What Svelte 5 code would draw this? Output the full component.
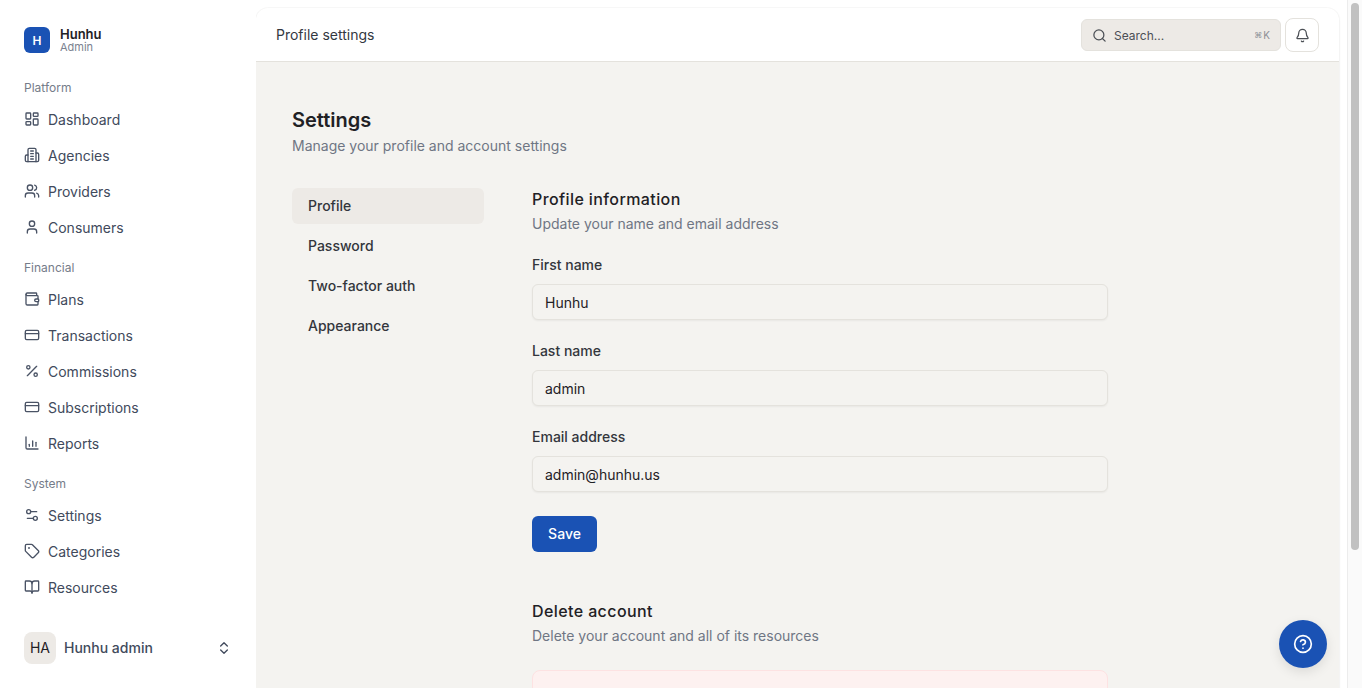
<script>
  const sections = [
    { label: 'Platform', items: ['Dashboard', 'Agencies', 'Providers', 'Consumers'] },
    { label: 'Financial', items: ['Plans', 'Transactions', 'Commissions', 'Subscriptions', 'Reports'] },
    { label: 'System', items: ['Settings', 'Categories', 'Resources'] }
  ];
  const icons = {
    Dashboard: '<rect width="7" height="9" x="3" y="3" rx="1"/><rect width="7" height="5" x="14" y="3" rx="1"/><rect width="7" height="9" x="14" y="12" rx="1"/><rect width="7" height="5" x="3" y="16" rx="1"/>',
    Agencies: '<path d="M6 22V4a2 2 0 0 1 2-2h8a2 2 0 0 1 2 2v18Z"/><path d="M6 12H4a2 2 0 0 0-2 2v6a2 2 0 0 0 2 2h2"/><path d="M18 9h2a2 2 0 0 1 2 2v9a2 2 0 0 1-2 2h-2"/><path d="M10 6h4"/><path d="M10 10h4"/><path d="M10 14h4"/><path d="M10 18h4"/>',
    Providers: '<path d="M16 21v-2a4 4 0 0 0-4-4H6a4 4 0 0 0-4 4v2"/><circle cx="9" cy="7" r="4"/><path d="M22 21v-2a4 4 0 0 0-3-3.87"/><path d="M16 3.13a4 4 0 0 1 0 7.75"/>',
    Consumers: '<path d="M19 21v-2a4 4 0 0 0-4-4H9a4 4 0 0 0-4 4v2"/><circle cx="12" cy="7" r="4"/>',
    Plans: '<path d="M19 7V4a1 1 0 0 0-1-1H5a2 2 0 0 0 0 4h15a1 1 0 0 1 1 1v4h-3a2 2 0 0 0 0 4h3a1 1 0 0 0 1-1v-2a1 1 0 0 0-1-1"/><path d="M3 5v14a2 2 0 0 0 2 2h15a1 1 0 0 0 1-1v-4"/>',
    Transactions: '<rect width="20" height="14" x="2" y="5" rx="2"/><line x1="2" x2="22" y1="10" y2="10"/>',
    Commissions: '<line x1="19" x2="5" y1="5" y2="19"/><circle cx="6.5" cy="6.5" r="2.5"/><circle cx="17.5" cy="17.5" r="2.5"/>',
    Subscriptions: '<rect width="20" height="14" x="2" y="5" rx="2"/><line x1="2" x2="22" y1="10" y2="10"/>',
    Reports: '<path d="M3 3v16a2 2 0 0 0 2 2h16"/><path d="M8 17v-3"/><path d="M13 17V9"/><path d="M18 17v-6"/>',
    Settings: '<path d="M14 17H5"/><path d="M19 7h-9"/><circle cx="17" cy="17" r="3"/><circle cx="7" cy="7" r="3"/>',
    Categories: '<path d="M12.586 2.586A2 2 0 0 0 11.172 2H4a2 2 0 0 0-2 2v7.172a2 2 0 0 0 .586 1.414l8.704 8.704a2.426 2.426 0 0 0 3.42 0l6.58-6.58a2.426 2.426 0 0 0 0-3.42z"/><circle cx="7.5" cy="7.5" r=".5" fill="currentColor"/>',
    Resources: '<path d="M12 7v14"/><path d="M3 18a1 1 0 0 1-1-1V4a1 1 0 0 1 1-1h5a4 4 0 0 1 4 4 4 4 0 0 1 4-4h5a1 1 0 0 1 1 1v13a1 1 0 0 1-1 1h-6a3 3 0 0 0-3 3 3 3 0 0 0-3-3z"/>'
  };
  const tabs = ['Profile', 'Password', 'Two-factor auth', 'Appearance'];
  const fields = [
    { label: 'First name', value: 'Hunhu' },
    { label: 'Last name', value: 'admin' },
    { label: 'Email address', value: 'admin@hunhu.us' }
  ];
</script>

<div class="shell">
  <aside class="sidebar">
    <div class="brand">
      <div class="logo">H</div>
      <div class="brand-text">
        <div class="brand-name">Hunhu</div>
        <div class="brand-role">Admin</div>
      </div>
    </div>
    <nav class="nav">
      {#each sections as section}
        <div class="section-label">{section.label}</div>
        {#each section.items as item}
          <div class="nav-item">
            <svg class="icon" viewBox="0 0 24 24" fill="none" stroke="currentColor" stroke-width="2" stroke-linecap="round" stroke-linejoin="round">{@html icons[item]}</svg>
            <span>{item}</span>
          </div>
        {/each}
      {/each}
    </nav>
    <div class="user">
      <div class="avatar">HA</div>
      <div class="user-name">Hunhu admin</div>
      <svg class="chev" viewBox="0 0 24 24" fill="none" stroke="currentColor" stroke-width="2" stroke-linecap="round" stroke-linejoin="round"><path d="m7 15 5 5 5-5"/><path d="m7 9 5-5 5 5"/></svg>
    </div>
  </aside>

  <main class="main">
    <header class="topbar">
      <div class="crumb">Profile settings</div>
      <div class="top-actions">
        <div class="search">
          <svg class="search-icon" viewBox="0 0 24 24" fill="none" stroke="currentColor" stroke-width="2" stroke-linecap="round" stroke-linejoin="round"><circle cx="11" cy="11" r="8"/><path d="m21 21-4.3-4.3"/></svg>
          <span class="search-text">Search...</span>
          <span class="kbd"><span class="cmd">⌘</span><span>K</span></span>
        </div>
        <button class="bell" aria-label="Notifications">
          <svg viewBox="0 0 24 24" fill="none" stroke="currentColor" stroke-width="2" stroke-linecap="round" stroke-linejoin="round"><path d="M10.268 21a2 2 0 0 0 3.464 0"/><path d="M3.262 15.326A1 1 0 0 0 4 17h16a1 1 0 0 0 .74-1.673C19.41 13.956 18 12.499 18 8A6 6 0 0 0 6 8c0 4.499-1.411 5.956-2.738 7.326"/></svg>
        </button>
      </div>
    </header>

    <div class="content">
      <h1>Settings</h1>
      <p class="lead">Manage your profile and account settings</p>

      <div class="columns">
        <div class="tabs">
          {#each tabs as tab, i}
            <div class="tab" class:active={i === 0}>{tab}</div>
          {/each}
        </div>

        <div class="panel">
          <h2 class="first">Profile information</h2>
          <p class="sub">Update your name and email address</p>

          <div class="fields">
            {#each fields as f}
              <div class="field">
                <div class="field-label">{f.label}</div>
                <div class="input">{f.value}</div>
              </div>
            {/each}
          </div>
          <button class="save">Save</button>

          <h2 class="delete-title">Delete account</h2>
          <p class="sub">Delete your account and all of its resources</p>

          <div class="danger"></div>
        </div>
      </div>
    </div>
  </main>

  <button class="help" aria-label="Help">
    <svg viewBox="0 0 24 24" fill="none" stroke="currentColor" stroke-width="2" stroke-linecap="round" stroke-linejoin="round"><circle cx="12" cy="12" r="10"/><path d="M9.09 9a3 3 0 0 1 5.83 1c0 2-3 3-3 3"/><path d="M12 17h.01"/></svg>
  </button>

  <div class="scrollbar"><div class="thumb"></div></div>
</div>

<style>
  :global(body) {
    margin: 0;
    background: #fff;
    font-family: Inter, "Liberation Sans", sans-serif;
    color: #1f2125;
  }
  .shell { display: flex; align-items: flex-start; }
  .sidebar {
    position: sticky;
    top: 0;
    width: 256px;
    height: 688px;
    flex: none;
    box-sizing: border-box;
    display: flex;
    flex-direction: column;
    padding: 0 24px;
    background: #fff;
  }
  .brand { display: flex; align-items: center; gap: 10px; height: 26px; margin-top: 27px; }
  .logo {
    width: 26px; height: 26px; border-radius: 6px; background: #1a52b4; color: #fff;
    display: flex; align-items: center; justify-content: center;
    font-size: 12px; font-weight: 600;
  }
  .brand-name { font-size: 13px; font-weight: 600; line-height: 14px; color: #1f2125; }
  .brand-role { font-size: 11px; line-height: 13px; color: #7b8290; }
  .nav { margin-top: 27px; flex: 1; }
  .section-label {
    font-size: 12px; line-height: 16px; color: #757c89; margin-bottom: 5px;
  }
  .nav-item + .section-label { margin-top: 15px; }
  .nav-item {
    display: flex; align-items: center; gap: 8px; height: 36px;
    font-size: 14px; color: #414a5c;
  }
  .icon { width: 16px; height: 16px; flex: none; color: #4a5365; }
  .user { display: flex; align-items: center; height: 32px; margin-bottom: 24px; }
  .avatar {
    width: 32px; height: 32px; box-sizing: border-box; padding-bottom: 1px; border-radius: 8px; background: #edeae6;
    display: flex; align-items: center; justify-content: center;
    font-size: 14px; color: #1f2125;
  }
  .user-name { margin: 0 0 1px 8px; font-size: 14px; font-weight: 500; color: #414a5c; flex: 1; }
  .chev { width: 16px; height: 16px; color: #414a5c; }

  .main {
    width: 1083px; flex: none; margin-top: 8px; background: #f4f3f0;
    border-radius: 12px 12px 0 0;
    box-shadow: 0 0 0 1px rgba(0, 0, 0, .025), 0 1px 3px rgba(0, 0, 0, .06);
  }
  .topbar {
    height: 54px; box-sizing: border-box; background: #fff;
    border-bottom: 1px solid #e4e2dd;
    border-radius: 12px 12px 0 0;
    display: flex; align-items: center; justify-content: space-between;
    padding: 1px 20px 0;
  }
  .crumb { font-size: 14px; color: #33383f; margin-bottom: 2px; }
  .top-actions { display: flex; align-items: center; gap: 4px; }
  .search {
    width: 200px; height: 32px; box-sizing: border-box; background: #edeae6;
    border: 1px solid #e4e2dd; border-radius: 6px;
    display: flex; align-items: center; padding: 0 10px; color: #4b4f55;
  }
  .search-icon { width: 15px; height: 15px; flex: none; }
  .search-text { font-size: 12px; margin-left: 7px; flex: 1; color: #4b4f55; }
  .kbd { display: flex; align-items: center; gap: 1px; font-size: 10px; color: #8d9096; }
  .cmd { font-size: 8px; }
  .bell {
    width: 34px; height: 34px; padding: 0; background: #fff; border: 1px solid #e4e2dd;
    border-radius: 8px; display: flex; align-items: center; justify-content: center; color: #4b4f55;
  }
  .bell svg { width: 15px; height: 15px; }

  .content { padding: 44px 36px 60px; }
  h1 { margin: 0; font-size: 20px; line-height: 28px; font-weight: 600; color: #1f2125; }
  .lead { margin: 2px 0 0; font-size: 14px; line-height: 20px; color: #6f7684; }
  .columns { display: flex; margin-top: 32px; }
  .tabs { width: 192px; flex: none; display: flex; flex-direction: column; gap: 4px; }
  .tab {
    height: 36px; box-sizing: border-box; padding: 0 16px 2px; display: flex; align-items: center;
    font-size: 14px; font-weight: 500; color: #33363c; border-radius: 6px;
  }
  .tab.active { background: #edeae6; }
  .panel { width: 576px; margin-left: 48px; }
  h2 { margin: 0; font-size: 16px; line-height: 24px; font-weight: 500; letter-spacing: .4px; color: #1f2125; }
  h2.first { margin-top: -1px; }
  .sub { margin: 3px 0 0; font-size: 14px; line-height: 20px; color: #6f7684; }
  .fields { margin-top: 21px; display: flex; flex-direction: column; gap: 21px; }
  .field-label { font-size: 14px; font-weight: 500; line-height: 20px; color: #33363c; margin-bottom: 9px; }
  .input {
    height: 36px; box-sizing: border-box; border: 1px solid #e4e2dd; border-radius: 6px;
    background: #f4f3f0; box-shadow: 0 1px 2px rgba(0, 0, 0, .05);
    padding: 0 12px; display: flex; align-items: center; font-size: 14px; color: #1f2125;
  }
  .save {
    display: block; margin-top: 24px; width: 65px; height: 36px; padding: 0 0 2px; border: 0; border-radius: 6px;
    background: #1a52b4; color: #fff; font: 500 14px Inter, sans-serif;
  }
  .delete-title { margin-top: 47px; }
  .danger {
    margin-top: 24px; border: 1px solid #fde2e2; border-radius: 8px; background: #fdf1f0;
    height: 100px; box-sizing: border-box;
  }
  .help {
    position: fixed; left: 1279px; top: 620px; width: 48px; height: 48px; padding: 0; border: 0;
    border-radius: 50%; background: #1a52b4; color: #fff;
    display: flex; align-items: center; justify-content: center;
    box-shadow: 0 4px 12px rgba(0, 0, 0, .1);
  }
  .help svg { width: 20px; height: 20px; }
  .scrollbar {
    position: fixed; top: 0; right: 0; width: 15px; height: 688px;
    box-sizing: border-box; background: #fafafa; border-left: 1px solid #ececec;
  }
  .thumb {
    position: absolute; left: 3px; top: 3px; width: 8px; height: 547px;
    border-radius: 4px; background: #c1c1c1;
  }
</style>
